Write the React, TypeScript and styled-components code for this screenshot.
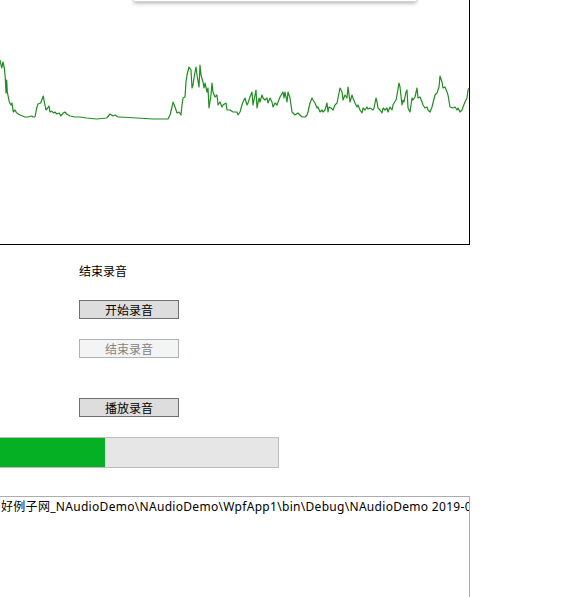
import styled, { createGlobalStyle } from "styled-components"

const GlobalStyle = createGlobalStyle`
    html, body {
        margin: 0;
        padding: 0;
        background: #ffffff;
        overflow: hidden;
    }
    body {
        font-family: "Noto Sans", "Noto Sans CJK SC", sans-serif;
        font-size: 12px;
        color: #000000;
    }
`

// recorded level samples, x / y inside the plot
const wave: [number, number][] = [
    [0, 60], [1.7, 68], [3, 62], [4.3, 68], [5.3, 78], [6, 93], [6.7, 80], [7.3, 92], [9.3, 102], [11, 105],
    [12, 103], [13.3, 112], [15, 110], [16.7, 113], [20, 115], [25, 117], [28, 117], [31.7, 116], [33, 117],
    [35, 117], [36.7, 108], [38, 104], [40.7, 103], [43.3, 96], [44.3, 102], [46, 110], [47.7, 108], [49, 106],
    [50, 112], [51.7, 111], [53.3, 113], [55, 112], [56.7, 114], [59.3, 113], [60.7, 116], [63.3, 113], [65, 112],
    [66.7, 114], [70, 116], [75, 117], [80, 117], [86.7, 118], [96.7, 119], [106.7, 118], [110, 114], [113, 116],
    [115, 115], [118, 117], [120, 117], [137, 118], [153, 119], [168, 119], [170, 115], [172, 107], [173, 102],
    [175, 107], [177, 113], [179, 112], [181, 115], [182, 105], [183, 98], [185, 97], [186, 82], [187, 75],
    [189, 67], [191, 70], [192, 88], [193, 85], [194, 78], [196, 67], [197, 75], [199, 87], [200, 65], [201, 75],
    [203, 82], [204, 88], [205, 83], [207, 92], [208, 88], [209, 108], [211, 95], [212, 83], [213, 92], [215, 97],
    [217, 95], [218, 105], [220, 102], [222, 107], [223, 105], [226, 103], [227, 110], [230, 110], [233, 112],
    [237, 112], [238, 115], [240, 112], [242, 105], [243, 102], [245, 98], [247, 105], [248, 103], [250, 97],
    [252, 92], [253, 105], [254, 100], [256, 90], [257, 108], [259, 98], [260, 102], [262, 95], [263, 98],
    [265, 100], [267, 98], [268, 103], [270, 98], [272, 102], [273, 107], [275, 103], [277, 105], [278, 102],
    [280, 97], [283, 92], [284, 98], [285, 92], [287, 102], [288, 92], [290, 98], [292, 112], [295, 115],
    [298, 113], [302, 117], [305, 117], [307, 115], [308, 112], [310, 103], [312, 98], [313, 100], [315, 103],
    [317, 108], [318, 107], [320, 112], [322, 110], [323, 112], [325, 110], [327, 103], [328, 112], [329, 107],
    [331, 108], [333, 110], [335, 105], [337, 103], [338, 98], [340, 88], [342, 92], [343, 100], [345, 95],
    [347, 98], [348, 87], [350, 102], [352, 95], [353, 98], [355, 103], [357, 107], [358, 105], [360, 110],
    [362, 113], [363, 108], [365, 110], [367, 107], [368, 109], [370, 108], [373, 110], [374, 108], [376, 98],
    [377, 102], [378, 108], [380, 110], [382, 113], [383, 108], [385, 110], [387, 108], [388, 112], [390, 107],
    [392, 110], [393, 105], [394, 103], [396, 100], [397, 95], [399, 83], [400, 87], [402, 105], [403, 100],
    [404, 102], [406, 92], [407, 90], [408, 108], [410, 112], [412, 98], [413, 100], [415, 97], [417, 88],
    [418, 98], [420, 97], [422, 102], [423, 105], [425, 108], [427, 107], [428, 110], [430, 112], [432, 107],
    [433, 103], [435, 95], [437, 93], [439, 87], [440, 76], [442, 82], [443, 88], [445, 87], [447, 92],
    [448, 95], [450, 107], [453, 108], [455, 107], [457, 110], [458, 108], [460, 112], [462, 110], [463, 107],
    [465, 102], [467, 98], [468, 90], [469, 88],
]

const Waveform = () => (
    <svg width="469" height="244" viewBox="0 0 469 244">
        <polyline
            points={wave.map(([x, y]) => `${x},${y}`).join(" ")}
            fill="none"
            stroke="#1f8c1f"
            strokeWidth="1.2"
            strokeLinejoin="round"
        />
    </svg>
)

export default function App() {
    return (
        <>
            <GlobalStyle />
            <Window>
                <PopupEdge />
                <Plot>
                    <Waveform />
                </Plot>
                <Controls>
                    <StatusLabel>结束录音</StatusLabel>
                    <Button $top={21}>开始录音</Button>
                    <Button $top={20} disabled>结束录音</Button>
                    <Button $top={40}>播放录音</Button>
                </Controls>
                <Progress>
                    <ProgressFill style={{ width: `${(106 / 280) * 100}%` }} />
                </Progress>
                <LogBox>
                    <LogLine>好例子网_NAudioDemo\NAudioDemo\WpfApp1\bin\Debug\NAudioDemo 2019-05-20 15-32-10.wav</LogLine>
                </LogBox>
            </Window>
        </>
    )
}

const Window = styled.div`
    position: relative;
    display: flex;
    flex-direction: column;
    width: 569px;
    height: 597px;
    overflow: hidden;

    & > * {
        flex-shrink: 0;
    }
`

const PopupEdge = styled.div`
    position: absolute;
    top: -20px;
    left: 134px;
    width: 282px;
    height: 21px;
    background: #ffffff;
    border-bottom: 1px solid #d4d4d4;
    box-shadow: 0 1px 4px rgba(0, 0, 0, 0.35);
    z-index: 2;
`

const Plot = styled.div`
    margin: -1px 0 0 -1px;
    width: 469px;
    height: 244px;
    border: 1px solid #000000;
    background: #ffffff;

    svg {
        display: block;
    }
`

const Controls = styled.div`
    display: flex;
    flex-direction: column;
    align-items: flex-start;
    padding-left: 79px;
    margin-top: 18px;
`

const StatusLabel = styled.div`
    font-family: "Noto Sans CJK SC", sans-serif;
    font-size: 12px;
    line-height: 16px;
    height: 16px;
`

const Button = styled.button<{ $top: number }>`
    margin-top: ${p => p.$top}px;
    width: 100px;
    height: 19px;
    padding: 0;
    box-sizing: border-box;
    font-family: "Noto Sans CJK SC", sans-serif;
    font-size: 12px;
    line-height: 16px;
    color: #000000;
    background: #dddddd;
    border: 1px solid #707070;
    border-radius: 0;

    &:disabled {
        color: #838383;
        background: #f4f4f4;
        border-color: #adb2b5;
    }
`

const Progress = styled.div`
    margin: 20px 0 0 -1px;
    width: 280px;
    height: 31px;
    box-sizing: border-box;
    border: 1px solid #bcbcbc;
    background: #e6e6e6;
`

const ProgressFill = styled.div`
    height: 100%;
    background: #06b025;
`

const LogBox = styled.div`
    margin: 28px 0 0 -1px;
    width: 471px;
    height: 140px;
    box-sizing: border-box;
    border: 1px solid #abadb3;
    overflow: hidden;
    padding: 2px 0 0 1px;
`

const LogLine = styled.div`
    font-family: "Noto Sans", "Noto Sans CJK SC", sans-serif;
    font-size: 12px;
    letter-spacing: 0.3px;
    line-height: 16px;
    white-space: nowrap;
    color: #000000;
`
